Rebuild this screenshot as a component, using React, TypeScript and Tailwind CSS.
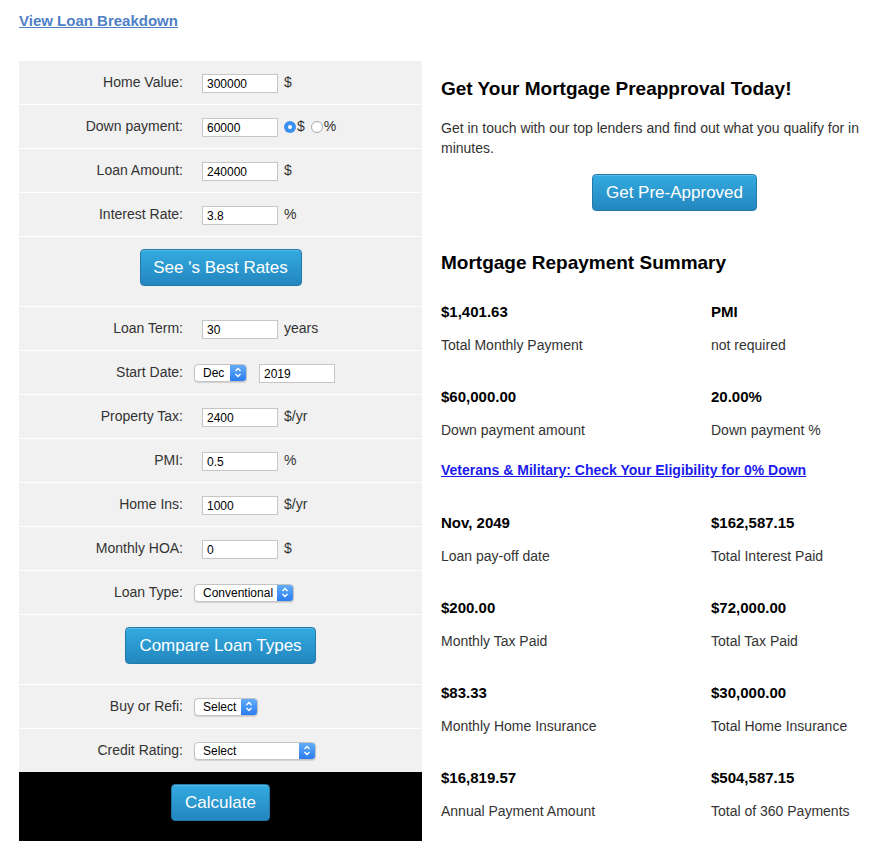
import React from 'react';

const btn =
  'inline-flex items-center justify-center h-[37px] rounded-[4px] border border-[#2479ab] bg-gradient-to-b from-[#33abe0] to-[#2486bf] text-white text-[17px] leading-none shadow-[inset_0_1px_0_rgba(255,255,255,0.2)]';

function TextBox({ value, w = 'w-[76px]' }: { value: string; w?: string }) {
  return (
    <input
      type="text"
      defaultValue={value}
      className={`${w} h-[19px] border border-[#c6c6c6] bg-white px-[4px] text-[12px] text-black outline-none`}
    />
  );
}

function FakeSelect({ text, w }: { text: string; w: string }) {
  return (
    <div
      className={`${w} h-[18px] flex rounded-[4px] border border-[#c3c3c3] bg-white shadow-[0_1px_1px_rgba(0,0,0,0.12)] overflow-hidden`}
    >
      <span className="flex-1 pl-[8px] text-[12px] leading-[16px] text-black">{text}</span>
      <span className="w-[16px] flex items-center justify-center bg-gradient-to-b from-[#63adf8] to-[#2a7cf0]">
        <svg width="8" height="11" viewBox="0 0 8 11" fill="none" stroke="white" strokeWidth="1.4">
          <path d="M1.5 4 L4 1.5 L6.5 4" />
          <path d="M1.5 7 L4 9.5 L6.5 7" />
        </svg>
      </span>
    </div>
  );
}

function Row({ label, children }: { label: string; children: React.ReactNode }) {
  return (
    <div className="h-[44px] flex items-center border-b border-white">
      <div className="w-[164px] text-right text-[14px] text-[#333]">{label}</div>
      <div className="pl-[11px] flex items-center">{children}</div>
    </div>
  );
}

function Unit({ children }: { children: React.ReactNode }) {
  return <span className="ml-[6px] text-[14px] text-[#333]">{children}</span>;
}

function Stat({ value, label }: { value: string; label: string }) {
  return (
    <div>
      <div className="text-[15px] leading-[20px] font-bold text-black">{value}</div>
      <div className="mt-[13px] text-[14px] leading-[20px] text-[#333]">{label}</div>
    </div>
  );
}

export default function App() {
  return (
    <div className="min-h-screen bg-white pt-[9px] pl-[19px] font-['Liberation_Sans',Arial,sans-serif]">
      <a href="#" className="text-[15px] leading-[20px] font-bold text-[#4f80c6] underline">
        View Loan Breakdown
      </a>

      <div className="mt-[28px] flex">
        {/* calculator form */}
        <div className="w-[403px] bg-[#f1f1f1]">
          <Row label="Home Value:">
            <span className="ml-[8px]"><TextBox value="300000" /></span>
            <Unit>$</Unit>
          </Row>
          <Row label="Down payment:">
            <span className="ml-[8px]"><TextBox value="60000" /></span>
            <span className="ml-[6px] flex items-center text-[14px] text-[#333]">
              <span className="w-[12px] h-[12px] rounded-full bg-[#3b8ff0] flex items-center justify-center">
                <span className="w-[4px] h-[4px] rounded-full bg-white" />
              </span>
              <span className="ml-[1px]">$</span>
              <span className="ml-[6px] w-[12px] h-[12px] rounded-full border border-[#a9a9a9] bg-white" />
              <span className="ml-[1px]">%</span>
            </span>
          </Row>
          <Row label="Loan Amount:">
            <span className="ml-[8px]"><TextBox value="240000" /></span>
            <Unit>$</Unit>
          </Row>
          <Row label="Interest Rate:">
            <span className="ml-[8px]"><TextBox value="3.8" /></span>
            <Unit>%</Unit>
          </Row>
          <div className="h-[70px] flex items-center justify-center border-b border-white pb-[9px]">
            <button className={`${btn} w-[162px]`}>See 's Best Rates</button>
          </div>
          <Row label="Loan Term:">
            <span className="ml-[8px]"><TextBox value="30" /></span>
            <Unit>years</Unit>
          </Row>
          <Row label="Start Date:">
            <FakeSelect text="Dec" w="w-[53px]" />
            <span className="ml-[12px]"><TextBox value="2019" /></span>
          </Row>
          <Row label="Property Tax:">
            <span className="ml-[8px]"><TextBox value="2400" /></span>
            <Unit>$/yr</Unit>
          </Row>
          <Row label="PMI:">
            <span className="ml-[8px]"><TextBox value="0.5" /></span>
            <Unit>%</Unit>
          </Row>
          <Row label="Home Ins:">
            <span className="ml-[8px]"><TextBox value="1000" /></span>
            <Unit>$/yr</Unit>
          </Row>
          <Row label="Monthly HOA:">
            <span className="ml-[8px]"><TextBox value="0" /></span>
            <Unit>$</Unit>
          </Row>
          <Row label="Loan Type:">
            <FakeSelect text="Conventional" w="w-[100px]" />
          </Row>
          <div className="h-[70px] flex items-center justify-center border-b border-white pb-[9px]">
            <button className={`${btn} w-[191px]`}>Compare Loan Types</button>
          </div>
          <Row label="Buy or Refi:">
            <FakeSelect text="Select" w="w-[64px]" />
          </Row>
          <div className="h-[43px] flex items-center">
            <div className="w-[164px] text-right text-[14px] text-[#333]">Credit Rating:</div>
            <div className="pl-[11px] flex items-center">
              <FakeSelect text="Select" w="w-[122px]" />
            </div>
          </div>
          <div className="h-[69px] bg-black flex justify-center pt-[12px]">
            <button className={`${btn} w-[99px]`}>Calculate</button>
          </div>
        </div>

        {/* results */}
        <div className="ml-[19px] w-[430px]">
          <h2 className="mt-[17px] text-[19px] leading-[22px] font-bold text-black">
            Get Your Mortgage Preapproval Today!
          </h2>
          <p className="mt-[18px] text-[14px] leading-[20px] text-[#333] w-[425px]">
            Get in touch with our top lenders and find out what you qualify for in minutes.
          </p>
          <button className={`${btn} mt-[16px] ml-[151px] w-[165px]`}>Get Pre-Approved</button>

          <h2 className="mt-[41px] text-[19px] leading-[22px] font-bold text-black">
            Mortgage Repayment Summary
          </h2>

          <div className="mt-[28px] grid grid-cols-[270px_1fr] gap-y-[32px]">
            <Stat value="$1,401.63" label="Total Monthly Payment" />
            <Stat value="PMI" label="not required" />
            <Stat value="$60,000.00" label="Down payment amount" />
            <Stat value="20.00%" label="Down payment %" />
          </div>

          <a href="#" className="block mt-[20px] text-[14px] leading-[20px] font-bold text-[#1b1bef] underline">
            Veterans &amp; Military: Check Your Eligibility for 0% Down
          </a>

          <div className="mt-[33px] grid grid-cols-[270px_1fr] gap-y-[32px]">
            <Stat value="Nov, 2049" label="Loan pay-off date" />
            <Stat value="$162,587.15" label="Total Interest Paid" />
            <Stat value="$200.00" label="Monthly Tax Paid" />
            <Stat value="$72,000.00" label="Total Tax Paid" />
            <Stat value="$83.33" label="Monthly Home Insurance" />
            <Stat value="$30,000.00" label="Total Home Insurance" />
            <Stat value="$16,819.57" label="Annual Payment Amount" />
            <Stat value="$504,587.15" label="Total of 360 Payments" />
          </div>
        </div>
      </div>
    </div>
  );
}
